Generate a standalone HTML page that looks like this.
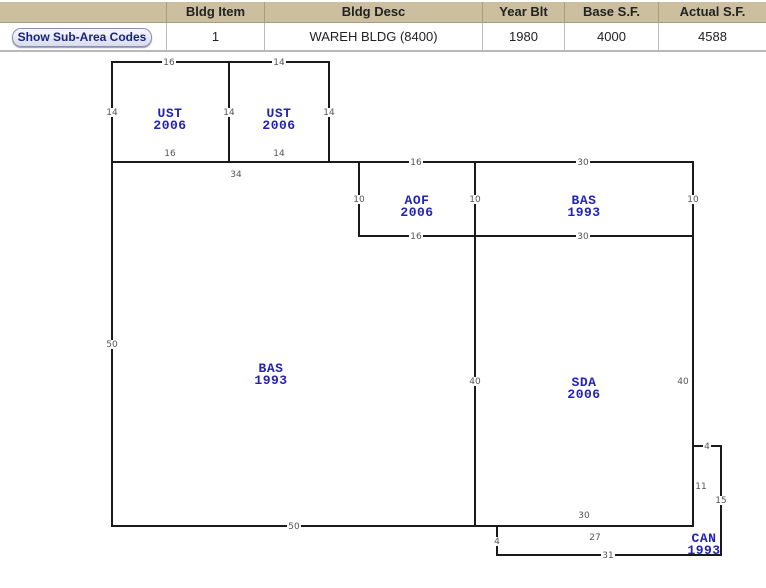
<!DOCTYPE html>
<html><head><style>
body{margin:0;width:766px;height:588px;background:#fff;overflow:hidden;font-family:"Liberation Sans",Arial,sans-serif;position:relative}
.hdr{position:absolute;left:0;top:2px;width:766px;height:20px;background:#cbbf9f;border-bottom:1px solid #a89c80}
.row{position:absolute;left:0;top:23px;width:766px;height:27px;border-bottom:2px solid #b8b8b8}
.c{position:absolute;top:0;height:100%;text-align:center;box-sizing:border-box;border-left:1px solid #a89c80}
.hdr .c{font-weight:bold;font-size:13px;line-height:20px;color:#222}
.row .c{font-size:13px;line-height:27px;color:#222;border-left:1px solid #bbb}
.btn{position:absolute;left:12px;top:5px;width:138px;height:17px;border:1px solid #8890b0;border-radius:9px;background:linear-gradient(#f8f8ff,#d8dcef);font-weight:bold;font-size:12px;line-height:17px;text-align:center;color:#1a237e;box-shadow:0 1px 1px #999}
svg text.d{font-family:"DejaVu Sans",sans-serif;font-size:9px;fill:#555;text-anchor:middle}
svg text.a{font-family:"Liberation Mono",monospace;font-weight:bold;font-size:13px;letter-spacing:0.5px;fill:#2222b8;text-anchor:middle}
</style></head><body>
<div class="hdr">
<div class="c" style="left:166px;width:98px">Bldg Item</div>
<div class="c" style="left:264px;width:218px">Bldg Desc</div>
<div class="c" style="left:482px;width:82px">Year Blt</div>
<div class="c" style="left:564px;width:94px">Base S.F.</div>
<div class="c" style="left:658px;width:108px">Actual S.F.</div>
</div>
<div class="row">
<div class="btn">Show Sub-Area Codes</div>
<div class="c" style="left:166px;width:98px">1</div>
<div class="c" style="left:264px;width:218px">WAREH BLDG (8400)</div>
<div class="c" style="left:482px;width:82px">1980</div>
<div class="c" style="left:564px;width:94px">4000</div>
<div class="c" style="left:658px;width:108px">4588</div>
</div>
<svg width="766" height="588" style="position:absolute;left:0;top:0">
<g stroke="#1a1a1a" stroke-width="2" fill="none">
<path d="M112 162V62H329V162"/><path d="M229 62V162"/>
<path d="M112 162H693V236H359V162"/>
<path d="M112 162V526H693V236"/><path d="M475 162V526"/>
<path d="M693 446H721V555H497V526"/>
</g>
<g class="lbl">
<rect x="162" y="58" width="14" height="8" fill="#fff"/><text class="d" x="169" y="65">16</text>
<rect x="272" y="58" width="14" height="8" fill="#fff"/><text class="d" x="279" y="65">14</text>
<rect x="105" y="108" width="14" height="9" fill="#fff"/><text class="d" x="112" y="115">14</text>
<rect x="222" y="108" width="14" height="9" fill="#fff"/><text class="d" x="229" y="115">14</text>
<rect x="322" y="108" width="14" height="9" fill="#fff"/><text class="d" x="329" y="115">14</text>
<text class="d" x="170" y="156">16</text><text class="d" x="279" y="156">14</text>
<text class="d" x="236" y="177">34</text>
<rect x="409" y="158" width="14" height="8" fill="#fff"/><text class="d" x="416" y="165">16</text>
<rect x="576" y="158" width="14" height="8" fill="#fff"/><text class="d" x="583" y="165">30</text>
<rect x="352" y="195" width="14" height="9" fill="#fff"/><text class="d" x="359" y="202">10</text>
<rect x="468" y="195" width="14" height="9" fill="#fff"/><text class="d" x="475" y="202">10</text>
<rect x="686" y="195" width="14" height="9" fill="#fff"/><text class="d" x="693" y="202">10</text>
<rect x="409" y="232" width="14" height="8" fill="#fff"/><text class="d" x="416" y="239">16</text>
<rect x="576" y="232" width="14" height="8" fill="#fff"/><text class="d" x="583" y="239">30</text>
<rect x="105" y="340" width="14" height="9" fill="#fff"/><text class="d" x="112" y="347">50</text>
<rect x="468" y="377" width="14" height="9" fill="#fff"/><text class="d" x="475" y="384">40</text>
<text class="d" x="683" y="384">40</text>
<rect x="287" y="522" width="14" height="8" fill="#fff"/><text class="d" x="294" y="529">50</text>
<text class="d" x="584" y="518">30</text>
<text class="d" x="595" y="540">27</text>
<text class="d" x="701" y="489">11</text>
<rect x="714" y="496" width="14" height="9" fill="#fff"/><text class="d" x="721" y="503">15</text>
<rect x="703" y="442" width="8" height="8" fill="#fff"/><text class="d" x="707" y="449">4</text>
<rect x="493" y="537" width="8" height="9" fill="#fff"/><text class="d" x="497" y="544">4</text>
<rect x="601" y="551" width="14" height="8" fill="#fff"/><text class="d" x="608" y="558">31</text>
</g>
<text class="a" x="170" y="117">UST</text><text class="a" x="170" y="129">2006</text>
<text class="a" x="279" y="117">UST</text><text class="a" x="279" y="129">2006</text>
<text class="a" x="417" y="204">AOF</text><text class="a" x="417" y="216">2006</text>
<text class="a" x="584" y="204">BAS</text><text class="a" x="584" y="216">1993</text>
<text class="a" x="271" y="372">BAS</text><text class="a" x="271" y="384">1993</text>
<text class="a" x="584" y="386">SDA</text><text class="a" x="584" y="398">2006</text>
<text class="a" x="704" y="542">CAN</text><text class="a" x="704" y="554">1993</text>
</svg>
</body></html>
